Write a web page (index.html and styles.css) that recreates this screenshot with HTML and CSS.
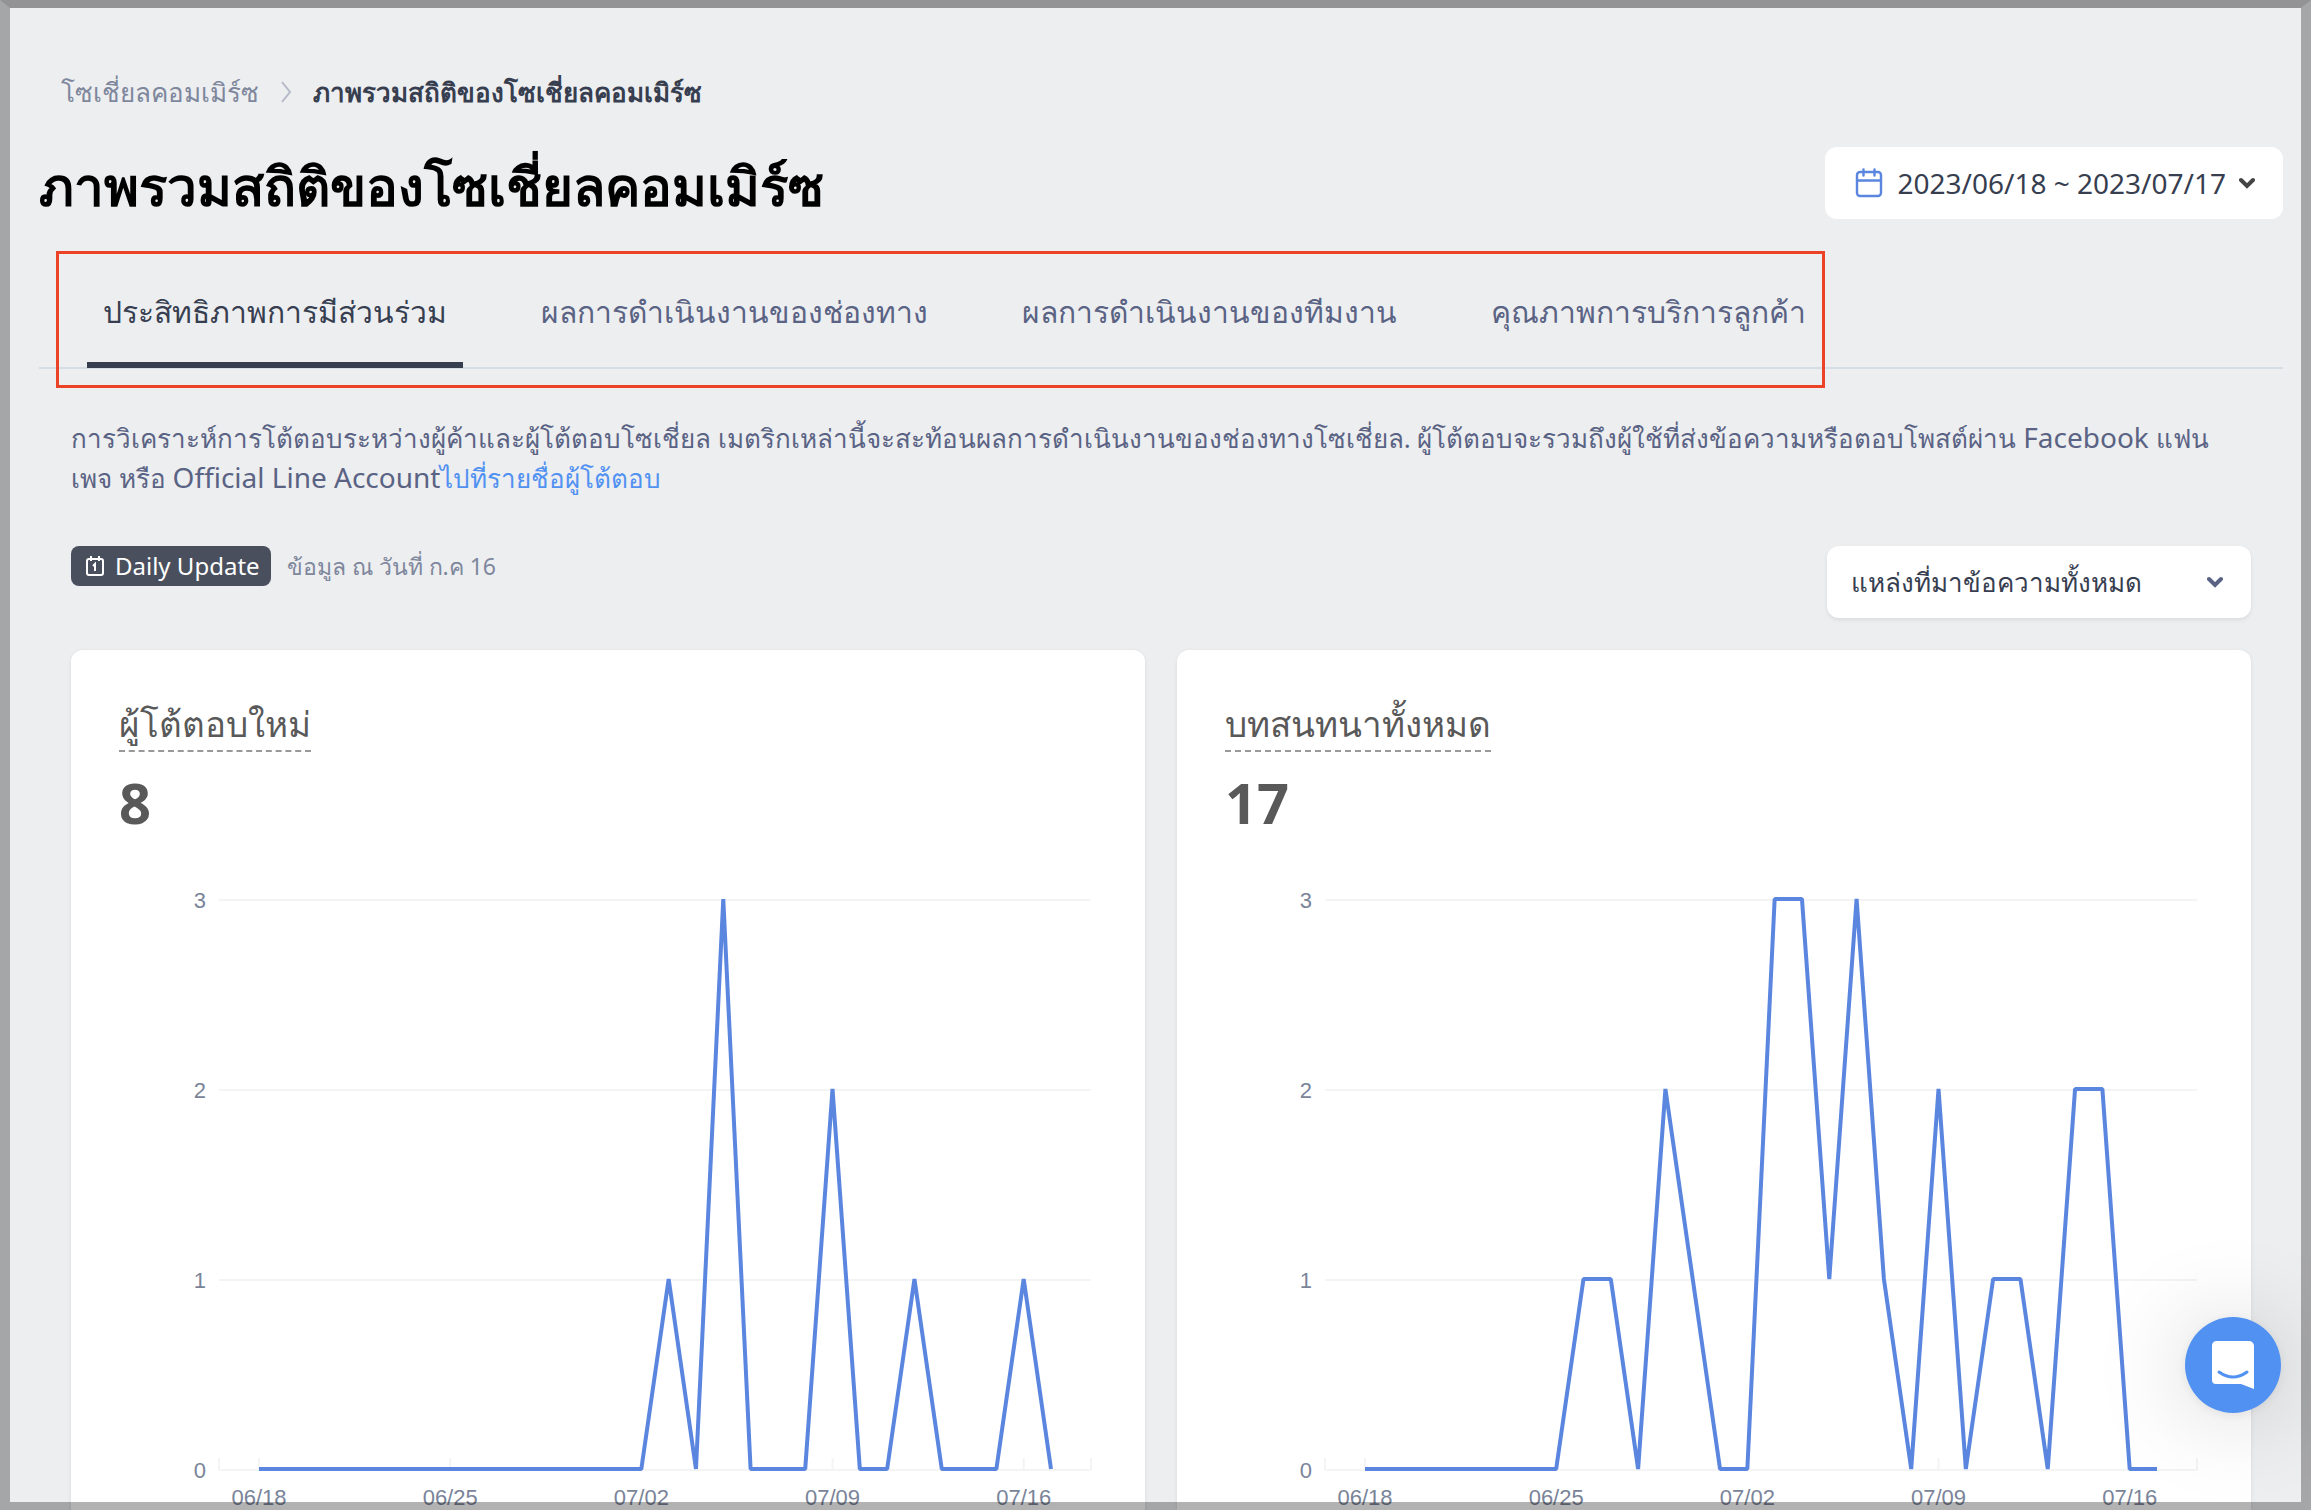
FILE: index.html
```html
<!DOCTYPE html>
<html lang="th">
<head>
  <meta charset="UTF-8">
  <meta name="viewport" content="width=device-width, initial-scale=1">
  <title>ภาพรวมสถิติของโซเชี่ยลคอมเมิร์ซ</title>
  <link rel="stylesheet" href="styles.css">
</head>
<body>
  <div class="page">
    <nav class="breadcrumb">
      <a href="#">โซเชี่ยลคอมเมิร์ซ</a>
      <svg width="12" height="22" viewBox="0 0 12 22"><path d="M2 1l8 10-8 10" fill="none" stroke="#b4bac8" stroke-width="2"/></svg>
      <span class="current">ภาพรวมสถิติของโซเชี่ยลคอมเมิร์ซ</span>
    </nav>

    <header class="page-header">
      <h1>ภาพรวมสถิติของโซเชี่ยลคอมเมิร์ซ</h1>
      <button type="button" class="date-button">
        <svg width="30" height="30" viewBox="0 0 30 30" fill="none" stroke="#5b86e0" stroke-width="2.4" stroke-linecap="round"><rect x="4" y="4" width="24" height="24" rx="3"/><path d="M4 12.5h24M10.5 1.5v6M21.5 1.5v6"/></svg>
        <span>2023/06/18 ~ 2023/07/17</span>
        <svg class="chevron" width="16" height="12" viewBox="0 0 16 12"><path d="M2 3l6 6 6-6"/></svg>
      </button>
    </header>

    <div class="tabs-row">
      <nav class="tabs">
        <a href="#" class="tab active">ประสิทธิภาพการมีส่วนร่วม</a>
        <a href="#" class="tab">ผลการดำเนินงานของช่องทาง</a>
        <a href="#" class="tab">ผลการดำเนินงานของทีมงาน</a>
        <a href="#" class="tab">คุณภาพการบริการลูกค้า</a>
      </nav>
    </div>

    <main class="content">
      <p class="description">การวิเคราะห์การโต้ตอบระหว่างผู้ค้าและผู้โต้ตอบโซเชี่ยล เมตริกเหล่านี้จะสะท้อนผลการดำเนินงานของช่องทางโซเชี่ยล. ผู้โต้ตอบจะรวมถึงผู้ใช้ที่ส่งข้อความหรือตอบโพสต์ผ่าน <span lang="en">Facebook</span> แฟน<wbr>เพจ หรือ <span lang="en">Official Line Account</span><a href="#">ไปที่รายชื่อผู้โต้ตอบ</a></p>

      <div class="toolbar">
        <div class="update-info">
          <span class="badge">
            <svg width="20" height="20" viewBox="0 0 20 20" fill="none" stroke="#fff" stroke-width="2"><rect x="2" y="3" width="16" height="16" rx="2"/><path d="M6 0v5M14 0v5M8 10l2-2v7"/></svg>
            Daily Update
          </span>
          <span class="as-of">ข้อมูล ณ วันที่ ก.ค 16</span>
        </div>
        <div class="select-box">
          <select aria-label="แหล่งที่มาข้อความ">
            <option>แหล่งที่มาข้อความทั้งหมด</option>
          </select>
          <svg class="chevron" width="16" height="12" viewBox="0 0 16 12"><path d="M2 3l6 6 6-6"/></svg>
        </div>
      </div>

      <div class="cards">
        <section class="card">
          <h2>ผู้โต้ตอบใหม่</h2>
          <div class="total">8</div>
          <svg class="chart" id="newContacts" viewBox="0 0 978 700"></svg>
        </section>
        <section class="card">
          <h2>บทสนทนาทั้งหมด</h2>
          <div class="total">17</div>
          <svg class="chart" id="conversations" viewBox="0 0 978 700"></svg>
        </section>
      </div>
    </main>
  </div>

  <button type="button" class="chat-button" aria-label="Chat">
    <svg width="44" height="50" viewBox="0 0 44 50"><path d="M5 1h33a5 5 0 0 1 5 5v43l-13-5H5a4 4 0 0 1-4-4V6a5 5 0 0 1 4-5z" fill="#fff"/><path d="M8 32q14 10 28 0" fill="none" stroke="#5191f2" stroke-width="3" stroke-linecap="round"/></svg>
  </button>

  <script>
    // One value per day, 06/18 to 07/17
    const newContacts = [0,0,0,0,0,0,0,0,0,0,0,0,0,0,0,1,0,3,0,0,0,2,0,0,1,0,0,0,1,0];
    const conversations = [0,0,0,0,0,0,0,0,1,1,0,2,1,0,0,3,3,1,3,1,0,2,0,1,1,0,2,2,0,0];
    const weeks = ['06/18', '06/25', '07/02', '07/09', '07/16'];

    const left = 100, right = 972, bottom = 620, unit = 190;
    const firstDay = 140, lastDay = 932;

    function drawChart(id, data) {
      const step = (lastDay - firstDay) / (data.length - 1);
      const x = day => firstDay + day * step;
      const y = value => bottom - value * unit;
      let out = '';

      // Grid lines and y labels
      for (let v = 0; v <= 3; v++) {
        out += `<line class="grid" x1="${left}" x2="${right}" y1="${y(v)}" y2="${y(v)}"/>`;
        out += `<text x="87" y="${y(v) + 8}" text-anchor="end">${v}</text>`;
      }

      // Ticks and x labels
      out += `<path class="grid" d="M${left} ${bottom}v-12M${right} ${bottom}v-12"/>`;
      weeks.forEach((label, i) => {
        out += `<path class="grid" d="M${x(i * 7)} ${bottom}v-12"/>`;
        out += `<text x="${x(i * 7)}" y="655" text-anchor="middle">${label}</text>`;
      });

      const points = data.map((v, i) => `${x(i)},${y(v) - 1}`).join(' ');
      out += `<polyline class="series" points="${points}"/>`;
      document.getElementById(id).innerHTML = out;
    }

    drawChart('newContacts', newContacts);
    drawChart('conversations', conversations);
  </script>
</body>
</html>
```
FILE: styles.css
```css
* {
  box-sizing: border-box;
}
body {
  margin: 0;
  height: 100vh;
  overflow: hidden;
  background: #edeef0;
  color: #373e50;
  font-family: "Noto Sans", "Open Sans", sans-serif;
  font-size: 26px;
  line-height: 40px;
}
/* Dimmed frame around the window */
body::after {
  content: "";
  position: fixed;
  inset: 0;
  border: solid rgba(0, 0, 0, 0.3);
  border-width: 8px 10px;
  border-top-color: rgba(0, 0, 0, 0.38);
  pointer-events: none;
}
a {
  color: inherit;
  text-decoration: none;
}
button, select {
  font: inherit;
  color: inherit;
  border: 0;
}
/* Thai glyphs run wide, so Latin text is set one step larger */
[lang="en"] {
  font-size: 28px;
  line-height: 1;
}
.page {
  padding: 72px 28px 0 39px;
}
.breadcrumb {
  display: flex;
  align-items: center;
  gap: 21px;
  padding-left: 22px;
  color: #7e879c;
}
.current {
  color: #373e50;
  font-weight: 600;
}
.page-header {
  display: flex;
  justify-content: space-between;
  align-items: center;
  margin-top: 35px;
}
h1 {
  margin: 0;
  padding-top: 6px;
  color: #000;
  font-size: 53px;
  line-height: 66px;
}
.date-button {
  display: flex;
  align-items: center;
  height: 72px;
  padding: 0 28px;
  border-radius: 12px;
  background: #fff;
  font-size: 28px;
}
.date-button span {
  margin: 0 13px 0 15px;
}
.chevron {
  fill: none;
  stroke: #444;
  stroke-width: 4;
  stroke-linecap: round;
}
.tabs-row {
  margin-top: 32px;
  height: 118px;
  border-bottom: 2px solid #d5dde5;
}
.tabs {
  display: flex;
  gap: 62px;
  width: fit-content;
  height: 137px;
  margin-left: 17px;
  padding: 0 0 17px 28px;
  border: 3px solid #ec4225;
}
.tab {
  display: flex;
  align-items: center;
  padding: 8px 16px 0;
  border-bottom: 6px solid transparent;
  color: #5a6384;
  font-size: 30px;
  font-weight: 500;
}
.tab.active {
  color: #373e50;
  border-color: #373e50;
}
.content {
  padding: 49px 32px 0;
}
.description {
  margin: 0;
  padding-right: 16px;
  color: #5a6384;
}
.description a {
  color: #5191f2;
}
.toolbar {
  display: flex;
  justify-content: space-between;
  align-items: flex-start;
  margin: 48px 0 32px;
}
.update-info {
  display: flex;
  align-items: center;
  gap: 16px;
  color: #7e879c;
  font-size: 23px;
}
.badge {
  display: flex;
  align-items: center;
  gap: 10px;
  height: 40px;
  padding: 0 11px 0 14px;
  border-radius: 8px;
  background: #4a4f5e;
  color: #fff;
  font-size: 24px;
}
.select-box {
  position: relative;
}
.select-box select {
  appearance: none;
  display: block;
  width: 424px;
  height: 72px;
  padding: 0 64px 0 24px;
  border-radius: 12px;
  background: #fff;
  box-shadow: 0 2px 4px rgba(0, 0, 0, 0.08);
}
.select-box .chevron {
  position: absolute;
  right: 28px;
  top: 30px;
  stroke: #5a6384;
}
.cards {
  display: grid;
  grid-template-columns: 1fr 1fr;
  gap: 32px;
}
.card {
  padding: 48px;
  background: #fff;
  border-radius: 12px;
  box-shadow: 0 1px 4px rgba(0, 0, 0, 0.08);
}
h2 {
  width: fit-content;
  margin: 0;
  border-bottom: 2px dashed #999;
  color: #595959;
  font-size: 35px;
  font-weight: 500;
  line-height: 52px;
}
.total {
  margin-top: 12px;
  color: #595959;
  font-size: 56px;
  font-weight: 700;
  line-height: 76px;
}
.chart {
  display: block;
  width: 100%;
  margin-top: 10px;
}
.chart text {
  fill: #7a8499;
  font-family: "Liberation Sans", Arial, sans-serif;
  font-size: 22px;
}
.chart .grid {
  stroke: #f4f4f5;
  stroke-width: 2;
}
.chart .series {
  fill: none;
  stroke: #5b86e0;
  stroke-width: 4;
  stroke-linejoin: bevel;
}
.chat-button {
  position: fixed;
  right: 30px;
  bottom: 97px;
  display: flex;
  align-items: center;
  justify-content: center;
  width: 96px;
  height: 96px;
  padding: 0;
  border-radius: 50%;
  background: #5191f2;
  box-shadow: 0 2px 12px rgba(0, 0, 0, 0.08), 0 4px 96px rgba(0, 0, 0, 0.18);
}
```
